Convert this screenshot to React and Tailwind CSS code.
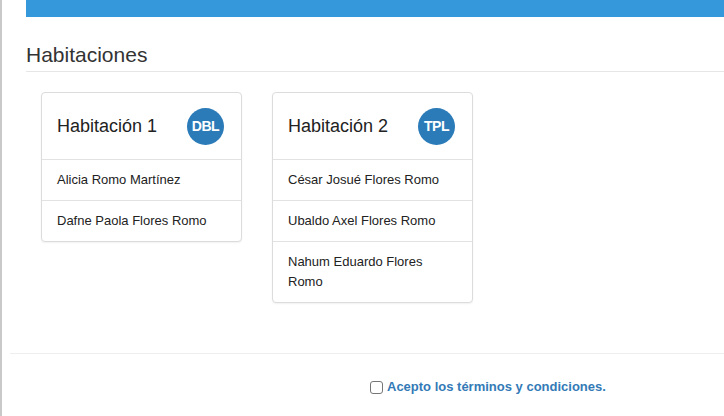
import React from "react";

const habitaciones = [
  {
    nombre: "Habitación 1",
    tipo: "DBL",
    huespedes: ["Alicia Romo Martínez", "Dafne Paola Flores Romo"],
  },
  {
    nombre: "Habitación 2",
    tipo: "TPL",
    huespedes: [
      "César Josué Flores Romo",
      "Ubaldo Axel Flores Romo",
      "Nahum Eduardo Flores Romo",
    ],
  },
];

const HabitacionCard = ({ habitacion }) => (
  <div className="w-[201px] bg-white border border-[#dcdcdc] rounded-[4px] shadow-[0_1px_2px_rgba(0,0,0,0.06)]">
    {/* cabecera */}
    <div className="h-[67px] flex items-center justify-between pl-[15px] pr-[17px] border-b border-[#e2e2e2]">
      <h4 className="text-[18px] leading-[22px] text-[#222]">{habitacion.nombre}</h4>
      <span className="w-[37px] h-[37px] rounded-full bg-[#2b7bb9] text-white text-[14px] font-bold tracking-[-0.5px] flex items-center justify-center">
        {habitacion.tipo}
      </span>
    </div>

    {/* huéspedes */}
    {habitacion.huespedes.map((h, i) => (
      <div
        key={h}
        className={`pl-[15px] pr-4 py-[10px] text-[13px] leading-[20px] text-[#222] ${
          i < habitacion.huespedes.length - 1 ? "border-b border-[#e2e2e2]" : ""
        }`}
      >
        {h}
      </div>
    ))}
  </div>
);

export default function App() {
  return (
    <div
      className="min-h-[416px] bg-white border-l-2 border-[#c9c9c9]"
      style={{ fontFamily: '"Liberation Sans", Arial, sans-serif' }}
    >
      {/* SECCIÓN HABITACIONES */}
      <section className="pl-[24px]">
        <div className="h-[17px] bg-[#3498db]" />

        <h3 className="mt-[26px] pb-[5px] text-[21px] leading-[23px] text-[#333] border-b border-[#e6e6e6]">
          Habitaciones
        </h3>

        <div className="mt-[20px] pl-[15px] flex items-start gap-[30px]">
          {habitaciones.map((hab) => (
            <HabitacionCard key={hab.nombre} habitacion={hab} />
          ))}
        </div>
      </section>

      {/* TÉRMINOS */}
      <div className="mt-[50px] ml-[8px] border-t border-[#eeeeee]">
        <label className="mt-[25px] pl-[360px] flex items-center gap-[4px] text-[13px] leading-[16px] font-bold text-[#337ab7]">
          <input
            type="checkbox"
            className="w-[13px] h-[13px] m-0 appearance-none border border-[#767676] rounded-[3px] bg-white"
          />
          Acepto los términos y condiciones.
        </label>
      </div>
    </div>
  );
}
